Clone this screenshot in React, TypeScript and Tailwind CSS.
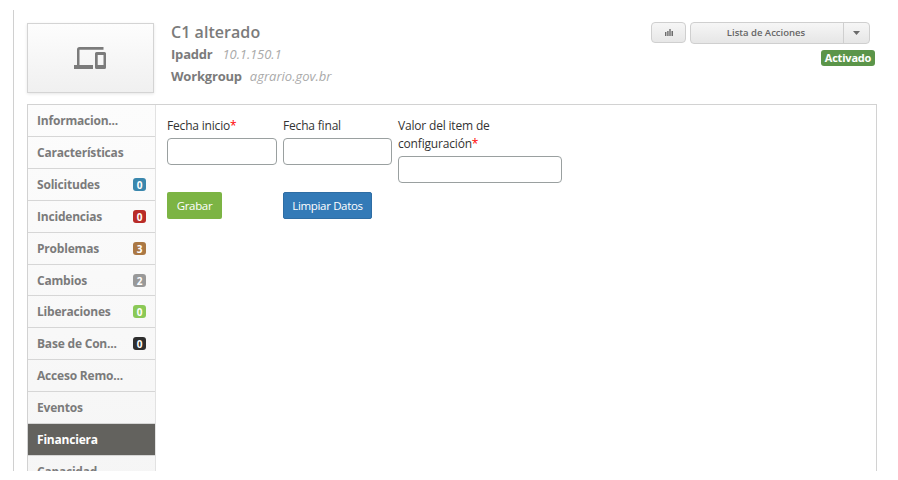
type Item = { label: string; count?: number; color?: string; active?: boolean; short?: boolean };

const items: Item[] = [
  { label: "Informacion..." },
  { label: "Características" },
  { label: "Solicitudes", count: 0, color: "bg-[#3a87ad]" },
  { label: "Incidencias", count: 0, color: "bg-[#b92c28]" },
  { label: "Problemas", count: 3, color: "bg-[#ab7844]" },
  { label: "Cambios", count: 2, color: "bg-[#999999]", short: true },
  { label: "Liberaciones", count: 0, color: "bg-[#8bc957]" },
  { label: "Base de Con...", count: 0, color: "bg-[#2e2e2e]" },
  { label: "Acceso Remo..." },
  { label: "Eventos" },
  { label: "Financiera", active: true },
  { label: "Capacidad" },
];

function MenuItem({ item }: { item: Item }) {
  return (
    <li
      className={`flex shrink-0 items-center justify-between border-b border-[#d6d6d6] pl-[9px] pr-[9px] text-[12px] font-bold ${
        item.short ? "h-[31px] pt-px" : "h-8"
      } ${item.active ? "bg-[#63625e] text-white" : "text-[#7b7b7b]"}`}
    >
      <span className="tracking-[-0.2px] whitespace-nowrap">{item.label}</span>
      {item.count !== undefined && (
        <span
          className={`flex h-[13px] w-[13px] items-center justify-center rounded-[3px] text-[10px] leading-none text-white ${item.color}`}
        >
          {item.count}
        </span>
      )}
    </li>
  );
}

type FieldProps = { lines: string[]; required?: boolean; width: string };

function Field({ lines, required, width }: FieldProps) {
  return (
    <label className={`block ${width}`}>
      {lines.map((line, i) => (
        <span key={line} className="block text-[12px] leading-[18px] tracking-[-0.18px]">
          {line}
          {required && i === lines.length - 1 && <span className="text-[#f00]">*</span>}
        </span>
      ))}
      <input className="mt-[3px] block h-[27px] w-full rounded-[4px] border border-[#9aa0a0] bg-white px-2 outline-none" />
    </label>
  );
}

export default function App() {
  return (
    <div className="h-[480px] w-[898px] overflow-hidden bg-white pt-[10px] font-['Open_Sans',sans-serif]">
      <div className="ml-[13px] flex h-[461px] flex-col overflow-hidden border-l border-[#d0d0d0] pl-[13px]">
        <header className="flex h-[94px] shrink-0 pt-[13px]">
          <div className="flex h-[70px] w-[127px] items-center justify-center border border-[#d4d4d4] bg-linear-to-b from-[#fdfdfd] to-[#f0f0f0] pr-px text-[#7b7b7b] shadow-[0_1px_3px_rgba(0,0,0,0.1)]">
            <svg width="32" height="22" viewBox="0 0 32 22" fill="currentColor">
              <path d="M5.5 2.8V18H19v4H0v-4h3V2.5A2.5 2.5 0 0 1 5.500 0H29.500v2.800z" />
              <path
                fillRule="evenodd"
                d="M22.500 5h8A1.500 1.500 0 0 1 32 6.500v14a1.500 1.500 0 0 1-1.500 1.500h-8a1.500 1.500 0 0 1-1.500-1.500v-14A1.500 1.500 0 0 1 22.500 5zM23.700 8v10h5.800V8z"
              />
            </svg>
          </div>
          <div className="ml-[17px] text-[13px] tracking-[-0.2px] text-[#7b7b7b]">
            <h1 className="-mt-[2px] text-[16px] leading-[22px] font-semibold tracking-[0.05px]">C1 alterado</h1>
            <p className="leading-[22px]">
              <b>Ipaddr</b>
              <i className="ml-[10px] tracking-[-0.1px] text-[#aaa]">10.1.150.1</i>
            </p>
            <p className="leading-[22px]">
              <b>Workgroup</b>
              <i className="ml-[8px] tracking-[0px] text-[#aaa]">agrario.gov.br</i>
            </p>
          </div>
          <div className="mr-[23px] ml-auto flex flex-col items-end">
            <div className="-mt-[1px] mr-[5px] flex items-start gap-1">
              <button className="flex h-[21px] w-[35px] items-center justify-center rounded-[4px] border border-[#cfcfcf] bg-linear-to-b from-[#f6f6f6] to-[#e7e7e7]">
                <svg width="8" height="7" viewBox="0 0 8 7" fill="#6c6c6c">
                  <path d="M0 3h1.400v4H0zM2.200 2h1.400v5H2.200zM4.300 0h1.400v7H4.300zM6.500 2H8v5H6.500z" />
                </svg>
              </button>
              <div className="flex h-[22px] w-[180px] rounded-[4px] border border-[#cfcfcf] bg-linear-to-b from-[#f6f6f6] to-[#e6e6e6] text-[#666]">
                <button className="flex-1 border-r border-[#cfcfcf] pr-[2px] text-[9.5px] leading-[20px] font-semibold">
                  Lista de Acciones
                </button>
                <button className="flex w-[25px] items-center justify-center pr-px">
                  <svg width="7" height="4" viewBox="0 0 7 4" fill="#6b6b6b">
                    <path d="M0 0h7L3.500 4z" />
                  </svg>
                </button>
              </div>
            </div>
            <span className="mt-[6px] flex h-4 w-[54px] items-center justify-center rounded-[3px] bg-[#5b9549] pb-px text-[11px] leading-none font-bold tracking-[-0.2px] text-white">
              Activado
            </span>
          </div>
        </header>
        <div className="flex h-[400px] w-[850px] shrink-0 border border-b-0 border-[#d2d2d2]">
          <ul className="flex w-[128px] shrink-0 flex-col border-r border-[#e2e2e2] bg-linear-to-b from-[#fcfcfc] to-[#f5f5f5]">
            {items.map((item) => (
              <MenuItem key={item.label} item={item} />
            ))}
          </ul>
          <main className="pt-[12px] pl-[11px] text-[12px] text-[#333]">
            <div className="flex h-[75px] items-start gap-[6px]">
              <Field lines={["Fecha inicio"]} required width="w-[110px]" />
              <Field lines={["Fecha final"]} width="w-[109px]" />
              <Field lines={["Valor del item de", "configuración"]} required width="w-[164px]" />
            </div>
            <div className="flex gap-[61px] text-[11.5px] tracking-[-0.35px] text-white">
              <button className="h-[27px] w-[55px] rounded-[2px] bg-[#7cb444] pt-px">Grabar</button>
              <button className="h-[27px] w-[89px] rounded-[2px] border border-[#2e6da4] bg-[#337ab7] pt-px">
                Limpiar Datos
              </button>
            </div>
          </main>
        </div>
      </div>
    </div>
  );
}
